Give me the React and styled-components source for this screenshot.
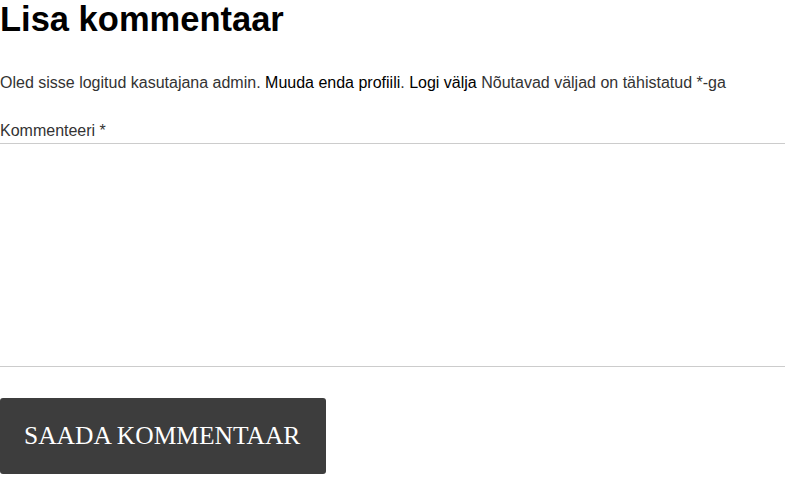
import React from "react";
import styled, { createGlobalStyle } from "styled-components";

const Global = createGlobalStyle`
  html, body { margin: 0; padding: 0; background: #fff; }
  body { font-family: "Liberation Sans", Arial, sans-serif; color: #333; }
`;

const Section = styled.section`
  display: flex;
  flex-direction: column;
  width: 785px;
`;

const Title = styled.h3`
  margin: -1px 0 0;
  font-family: "Liberation Sans", Arial, sans-serif;
  font-weight: 700;
  font-size: 34.5px;
  line-height: 40px;
  color: #000;
`;

const Notes = styled.p`
  margin: 32px 0 0;
  font-size: 16px;
  line-height: 24px;
  color: #333;
`;

const Link = styled.a`
  color: #000;
  text-decoration: none;
`;

const Field = styled.div`
  display: flex;
  flex-direction: column;
  margin-top: 24px;
`;

const Label = styled.label`
  font-size: 16px;
  line-height: 24px;
  color: #333;
`;

const TextArea = styled.textarea`
  box-sizing: border-box;
  width: 100%;
  height: 224px;
  margin: 0;
  border: none;
  border-top: 1px solid #ccc;
  border-bottom: 1px solid #ccc;
  resize: none;
  outline: none;
  font-family: inherit;
  font-size: 16px;
  background: #fff;
`;

const Submit = styled.button`
  align-self: flex-start;
  margin-top: 31px;
  width: 326px;
  height: 76px;
  padding: 0 0 0 24px;
  text-align: left;
  border: none;
  border-radius: 3px;
  background: #3d3d3d;
  color: #fff;
  font-family: "Liberation Serif", "Times New Roman", serif;
  font-size: 25.5px;
  text-transform: uppercase;
  cursor: pointer;
`;

export default function App() {
  return (
    <>
      <Global />
      <Section>
        <Title>Lisa kommentaar</Title>
        <Notes>
          Oled sisse logitud kasutajana admin. <Link href="#">Muuda enda profiili</Link>.{" "}
          <Link href="#">Logi välja</Link> Nõutavad väljad on tähistatud *-ga
        </Notes>
        <Field>
          <Label htmlFor="comment">Kommenteeri *</Label>
          <TextArea id="comment" />
        </Field>
        <Submit type="button">Saada kommentaar</Submit>
      </Section>
    </>
  );
}
